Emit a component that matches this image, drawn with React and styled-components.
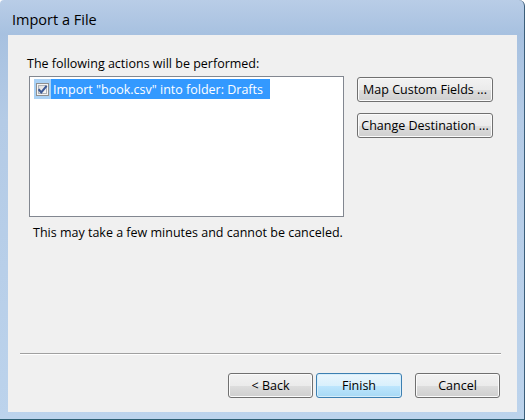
import React from 'react'
import styled, { createGlobalStyle } from 'styled-components'

const GlobalStyle = createGlobalStyle`
  html, body {
    margin: 0;
    padding: 0;
    background: #ffffff;
  }
  body {
    font-family: "Open Sans", "Noto Sans", "DejaVu Sans", sans-serif;
    font-size: 12.5px;
    color: #000;
  }
`

const Window = styled.div`
  width: 525px;
  height: 420px;
  box-sizing: border-box;
  display: flex;
  flex-direction: column;
  background: linear-gradient(to bottom, #b9cde7 0px, #a7c1e0 34px, #b4cbe6 120px, #bcd3ec 100%);
  border-right: 1px solid #3b5e7a;
  border-bottom: 1px solid #2d5e72;
  border-top-left-radius: 4px;
  border-top-right-radius: 6px;
  overflow: hidden;
`

const TitleBar = styled.div`
  height: 35px;
  flex: 0 0 35px;
  display: flex;
  align-items: center;
  padding: 3px 0 0 12px;
  font-size: 14.5px;
  color: #000;
  box-sizing: border-box;
`

const Client = styled.div`
  flex: 1;
  margin: 0 7px 7px 8px;
  background: #f0f0f0;
  display: flex;
  flex-direction: column;
  padding: 21px 17px 14px 12px;
  box-sizing: border-box;
`

const Label = styled.div`
  padding-left: 7px;
  line-height: 16px;
`

const MainRow = styled.div`
  display: flex;
  align-items: flex-start;
  margin-top: 4px;
  padding-left: 9px;
`

const ListBox = styled.div`
  width: 315px;
  height: 141px;
  box-sizing: border-box;
  border: 1px solid #828790;
  background: #ffffff;
  padding: 2px 4px;
`

const Item = styled.div`
  display: flex;
  align-items: stretch;
  height: 20px;
`

const CheckCell = styled.div`
  width: 17px;
  display: flex;
  align-items: center;
  justify-content: center;
  background: #a9d1f5;
`

const ItemText = styled.div`
  background: #3399ff;
  color: #ffffff;
  padding: 0 7px 0 2px;
  display: flex;
  align-items: center;
`

const SideButtons = styled.div`
  display: flex;
  flex-direction: column;
  gap: 11px;
  margin-left: 13px;
  margin-top: 1px;
`

const Button = styled.button`
  font-family: inherit;
  font-size: 12.5px;
  width: ${p => p.$w || 85}px;
  height: 25px;
  padding: 0;
  margin-left: ${p => p.$gap || 0}px;
  color: #000;
  border: 1px solid ${p => (p.$primary ? '#3c7fb1' : '#707070')};
  border-radius: 3px;
  box-shadow: inset 0 0 0 1px ${p => (p.$primary ? '#d7eefb' : '#fbfbfb')};
  background: ${p =>
    p.$primary
      ? 'linear-gradient(to bottom, #eaf6fd 0%, #d9f0fc 50%, #bee6fd 51%, #a7d9f5 100%)'
      : 'linear-gradient(to bottom, #f2f2f2 0%, #ebebeb 50%, #dddddd 51%, #cfcfcf 100%)'};
`

const Note = styled.div`
  margin-top: 8px;
  padding-left: 13px;
  line-height: 16px;
`

const Spacer = styled.div`
  flex: 1;
`

const Separator = styled.div`
  height: 1px;
  background: #a0a0a0;
  border-bottom: 1px solid #ffffff;
  margin-right: -1px;
`

const ButtonRow = styled.div`
  display: flex;
  justify-content: flex-end;
  margin-top: 18px;
`

const CheckBox = () => (
  <svg width="13" height="13" viewBox="0 0 13 13">
    <defs>
      <linearGradient id="cbg" x1="0" y1="0" x2="1" y2="1">
        <stop offset="0" stopColor="#dcdcdc" />
        <stop offset="1" stopColor="#fbfbfb" />
      </linearGradient>
    </defs>
    <rect x="0.5" y="0.5" width="12" height="12" fill="#f4f4f4" stroke="#8e8f8f" />
    <rect x="2.5" y="2.5" width="8" height="8" fill="url(#cbg)" stroke="#aeb3b9" />
    <path d="M2.6 6.2 L5.3 9.4 L10.6 2.8" fill="none" stroke="#3d5a96" strokeWidth="2.1" />
  </svg>
)

export default function App() {
  return (
    <Window>
      <GlobalStyle />
      <TitleBar>Import a File</TitleBar>
      <Client>
        <Label>The following actions will be performed:</Label>
        <MainRow>
          <ListBox>
            <Item>
              <CheckCell>
                <CheckBox />
              </CheckCell>
              <ItemText>Import "book.csv" into folder: Drafts</ItemText>
            </Item>
          </ListBox>
          <SideButtons>
            <Button $w={136}>Map Custom Fields ...</Button>
            <Button $w={136}>Change Destination ...</Button>
          </SideButtons>
        </MainRow>
        <Note>This may take a few minutes and cannot be canceled.</Note>
        <Spacer />
        <Separator />
        <ButtonRow>
          <Button>&lt; Back</Button>
          <Button $primary $w={86} $gap={3}>Finish</Button>
          <Button $gap={13}>Cancel</Button>
        </ButtonRow>
      </Client>
    </Window>
  )
}
